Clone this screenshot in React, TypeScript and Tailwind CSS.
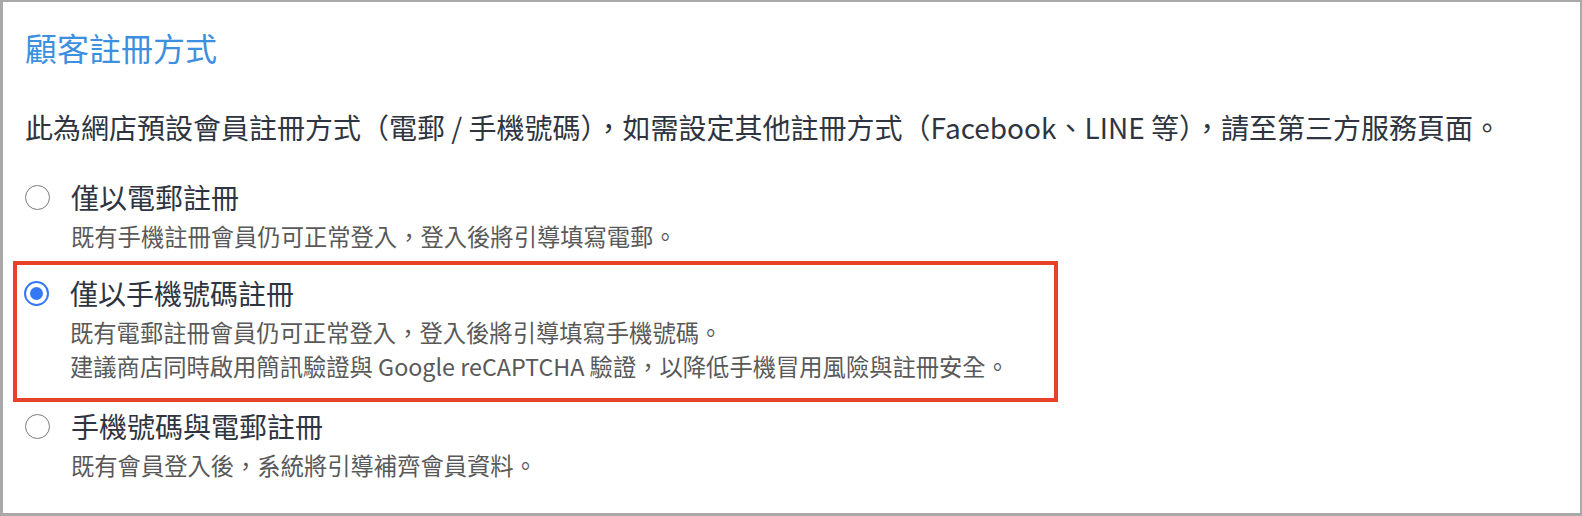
import React from "react";

type Option = {
  label: string;
  notes: string[];
  checked?: boolean;
};

const OPTIONS: Option[] = [
  { label: "僅以電郵註冊", notes: ["既有手機註冊會員仍可正常登入，登入後將引導填寫電郵。"] },
  {
    label: "僅以手機號碼註冊",
    notes: [
      "既有電郵註冊會員仍可正常登入，登入後將引導填寫手機號碼。",
      "建議商店同時啟用簡訊驗證與 Google reCAPTCHA 驗證，以降低手機冒用風險與註冊安全。",
    ],
    checked: true,
  },
  { label: "手機號碼與電郵註冊", notes: ["既有會員登入後，系統將引導補齊會員資料。"] },
];

function Radio({ checked }: { checked?: boolean }) {
  if (checked) {
    return (
      <span className="flex size-[25px] shrink-0 items-center justify-center rounded-full border-[2.5px] border-[#3478f6]">
        <span className="size-[13px] rounded-full bg-[#3478f6]" />
      </span>
    );
  }
  return <span className="size-[25px] shrink-0 rounded-full border-[1.5px] border-[#7a7a7a]" />;
}

function OptionRow({ option }: { option: Option }) {
  return (
    <div className="flex flex-col">
      <div className="flex h-[40px] items-center gap-[21px]">
        <Radio checked={option.checked} />
        <span className="text-[28px] text-[#2f3540]">{option.label}</span>
      </div>
      <div className="mt-[2px] flex flex-col pl-[46px]">
        {option.notes.map((n) => (
          <p key={n} className="h-[34px] text-[23.3px] leading-[34px] whitespace-nowrap text-[#595959]">
            {n}
          </p>
        ))}
      </div>
    </div>
  );
}

export default function App() {
  return (
    <div
      className="h-[516px] w-[1582px] border-t-2 border-r-2 border-b-[3px] border-l-[3px] border-[#a9a9a9] bg-white pt-[25px] pl-[22px]"
      style={{ fontFamily: '"Noto Sans CJK TC", "Noto Sans", sans-serif' }}
    >
      <h2 className="h-[40px] text-[32px] leading-[40px] text-[#3d8fe0]">顧客註冊方式</h2>
      <p className="mt-[40px] h-[40px] text-[28px] leading-[40px] whitespace-nowrap text-[#2f3540]">
        此為網店預設會員註冊方式（電郵 / 手機號碼），如需設定其他註冊方式（Facebook、LINE 等），請至第三方服務頁面。
      </p>

      <div className="mt-[30px] flex flex-col">
        <OptionRow option={OPTIONS[0]} />

        <div className="mt-[8px] ml-[-12px] w-[1045px] border-4 border-[#e8412a] pt-[8px] pb-[15px] pl-[7px]">
          <OptionRow option={OPTIONS[1]} />
        </div>

        <div className="mt-[4px]">
          <OptionRow option={OPTIONS[2]} />
        </div>
      </div>
    </div>
  );
}
